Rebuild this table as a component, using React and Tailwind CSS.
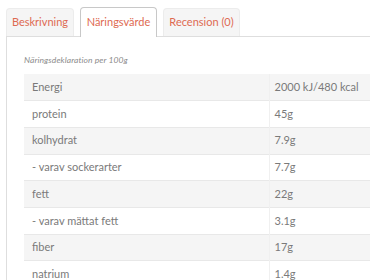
import React from 'react';

const rows = [
  ['Energi', '2000 kJ/480 kcal'],
  ['protein', '45g'],
  ['kolhydrat', '7.9g'],
  ['- varav sockerarter', '7.7g'],
  ['fett', '22g'],
  ['- varav mättat fett', '3.1g'],
  ['fiber', '17g'],
  ['natrium', '1.4g'],
];

// Flikar för produktinformation
function Tab({ label, active, width }) {
  if (active) {
    return (
      <div className={`flex h-[30px] ${width} items-center justify-center rounded-t-[4px] border border-b-0 border-[#c8c8c8] bg-white text-[11px] text-[#de6a52]`}>
        {label}
      </div>
    );
  }
  return (
    <div className={`mb-px flex h-[28px] ${width} items-center justify-center rounded-t-[4px] border border-b-0 border-[#ececec] bg-[#f5f5f5] text-[11px] text-[#de6a52]`}>
      {label}
    </div>
  );
}

export default function App() {
  return (
    <div className="h-[280px] w-[370px] overflow-hidden bg-white font-['Lato','Open_Sans',sans-serif]">
      <div className="relative z-10 -mb-px flex items-end gap-[6px] pl-[6px] pt-[7px]">
        <Tab label="Beskrivning" width="w-[68px]" />
        <Tab label="Näringsvärde" width="w-[77px]" active />
        <Tab label="Recension (0)" width="w-[77px]" />
      </div>

      <div className="ml-[6px] w-[440px] border-l border-t border-[#dedede] pl-[17px] pt-[17px]">
        <p className="h-[20px] text-[8.5px] italic tracking-[0.1px] text-[#8c8c8c]">Näringsdeklaration per 100g</p>
        <table className="w-[400px] border-collapse text-[11px] text-[#7a7a7a]">
          <tbody>
            {rows.map(([name, value], i) => (
              <tr
                key={name}
                className={`h-[26.7px] border-b border-[#e8e8e8] ${i % 2 === 0 ? 'bg-[#f5f5f5]' : 'bg-white'}`}
              >
                <td className="w-[245px] pl-[8px] align-middle">{name}</td>
                <td className="border-l border-[#f0f0f0] pl-[5px] align-middle">{value}</td>
              </tr>
            ))}
          </tbody>
        </table>
      </div>
    </div>
  );
}
